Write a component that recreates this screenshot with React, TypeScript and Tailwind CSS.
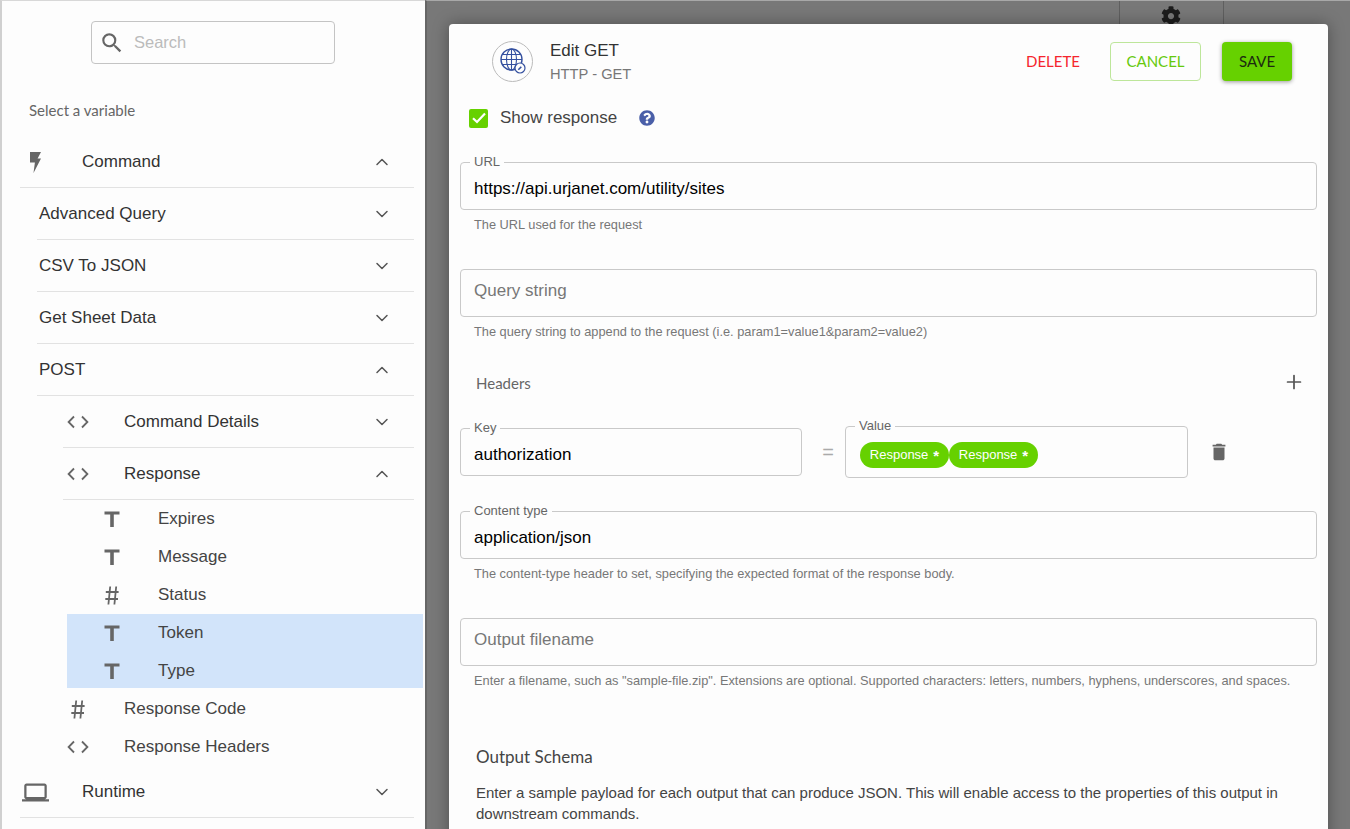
import React from "react";
import { ChevronDown, ChevronUp, Plus } from "lucide-react";
import { FaCog, FaQuestionCircle } from "react-icons/fa";
import { MdDelete, MdOutlineLaptop, MdSearch } from "react-icons/md";

const sans = "font-['Liberation_Sans',Arial,sans-serif]";
const lato = "font-['Lato',sans-serif]";

function Bolt() {
  return (
    <svg width="12" height="21" viewBox="0 0 12 21" className="text-[#666]">
      <path d="M1 0h11L8.6 6.5H12L4.5 21l1.4-10.5H1z" fill="currentColor" />
    </svg>
  );
}
function Code() {
  return (
    <svg width="22" height="14" viewBox="0 0 22 14" fill="none" stroke="#666" strokeWidth="1.8">
      <path d="M7 1.5 1.6 7 7 12.5M15 1.5 20.4 7 15 12.5" />
    </svg>
  );
}
function TIcon() {
  return (
    <svg width="16" height="16" viewBox="0 0 16 16" className="text-[#666]">
      <path d="M0.5 0.5h15v3H9.8V16H6.2V3.5H0.5z" fill="currentColor" />
    </svg>
  );
}
function HashIcon() {
  return (
    <svg width="14" height="19" viewBox="0 0 14 19" fill="none" stroke="#666" strokeWidth="1.8" className="shrink-0">
      <path d="M5.2 0.5 3.4 18.5M11.2 0.5 9.4 18.5M0.8 6H13.6M0.3 13H13" />
    </svg>
  );
}
function Chevron({ up }: { up?: boolean }) {
  const C = up ? ChevronUp : ChevronDown;
  return <C size={20} strokeWidth={1.8} className="text-[#555] shrink-0" />;
}
function Row({ label, up, icon, left, textLeft, chevron = true, lineLeft }: { label: string; up?: boolean; icon?: React.ReactNode; left: string; textLeft?: string; chevron?: boolean; lineLeft?: string }) {
  return (
    <div className={`relative h-[52px] flex items-center pr-[33px] ${left}`}>
      {icon && <div className="w-[42px] flex justify-center shrink-0">{icon}</div>}
      <span className={`flex-1 text-[17px] text-[#333] ${textLeft ?? ""}`}>{label}</span>
      {chevron && <Chevron up={up} />}
      <div className={`absolute bottom-0 right-[11px] h-px bg-[#e2e2e2] ${lineLeft ?? ""}`} />
    </div>
  );
}
function Leaf({ label, hash, selected, last }: { label: string; hash?: boolean; selected?: boolean; last?: boolean }) {
  return (
    <div className={`flex items-center pl-[37px] text-[17px] text-[#444] ${last ? "h-[36px] pt-[1px]" : "h-[38px]"} ${selected ? "bg-[#d2e4fa]" : ""}`}>
      <div className="w-[16px] flex justify-center shrink-0">
        {hash ? <HashIcon /> : <TIcon />}
      </div>
      <span className="ml-[38px]">{label}</span>
    </div>
  );
}
function Field({ label, value, placeholder, hint, className }: { label?: string; value?: string; placeholder?: string; hint: string; className?: string }) {
  return (
    <div className={className}>
      <div className="relative h-[48px] rounded-[4px] border border-[#c9c9c9] flex items-center px-[13px] text-[17px]">
        {label && <span className="absolute -top-[9px] left-[9px] bg-[#fdfdfd] px-[4px] text-[13px] leading-[16px] text-[#666]">{label}</span>}
        {value ? <span className="text-black pt-[6px]">{value}</span> : <span className="text-[#777] pb-[4px]">{placeholder}</span>}
      </div>
      <p className="mt-[7px] pl-[14px] text-[12.8px] leading-[16px] text-[#777]">{hint}</p>
    </div>
  );
}
function Chip() {
  return (
    <span className="h-[26px] w-[89px] rounded-full bg-[#66d100] text-white text-[13px] flex items-center justify-center gap-[5px]">
      Response <span className="text-[15px] font-bold leading-none">*</span>
    </span>
  );
}
function Globe() {
  return (
    <div className="w-[41px] h-[41px] rounded-full border border-[#bbb] flex items-center justify-center">
      <svg width="28" height="28" viewBox="0 0 28 28" fill="none" stroke="#34509f" strokeWidth="1.1">
        <circle cx="12.5" cy="12.5" r="10.5" strokeWidth="1.4" />
        <ellipse cx="12.5" cy="12.5" rx="5" ry="10.5" />
        <path d="M12.5 2v21M2 12.5h21M3.5 7.5h18M3.5 17.5h18" />
        <circle cx="21" cy="21" r="5" fill="#fdfdfd" strokeWidth="1.2" />
        <path d="M19.3 22.7 22.3 19.7" strokeWidth="1.6" />
      </svg>
    </div>
  );
}

export default function App() {
  return (
    <div className={`h-[829px] w-[1350px] flex overflow-hidden ${sans}`}>
      <aside className="w-[425px] shrink-0 h-full bg-[#fdfdfd] border-l-2 border-l-[#d0d0d0] border-t border-t-[#d8d8d8]">
        <div className="pt-[20px] pl-[89px]">
          <div className="w-[244px] h-[43px] rounded-[4px] border border-[#c4c4c4] flex items-center pl-[7px]">
            <MdSearch size={26} className="text-[#666]" />
            <span className="ml-[9px] text-[16.5px] text-[#bbb]">Search</span>
          </div>
        </div>
        <p className={`mt-[36px] pl-[27px] text-[15px] leading-[20px] text-[#666] ${lato}`}>Select a variable</p>
        <div className="mt-[16px]">
          <Row label="Command" up left="pl-[12px]" icon={<Bolt />} textLeft="ml-[26px]" lineLeft="left-[18px]" />
          <Row label="Advanced Query" left="pl-[37px]" lineLeft="left-[35px]" />
          <Row label="CSV To JSON" left="pl-[37px]" lineLeft="left-[35px]" />
          <Row label="Get Sheet Data" left="pl-[37px]" lineLeft="left-[35px]" />
          <Row label="POST" up left="pl-[37px]" lineLeft="left-[35px]" />
          <Row label="Command Details" left="pl-[55px]" icon={<Code />} textLeft="ml-[25px]" lineLeft="left-[61px]" />
          <Row label="Response" up left="pl-[55px]" icon={<Code />} textLeft="ml-[25px]" lineLeft="left-[61px]" />
          <div className="ml-[65px] mr-[2px]">
            <Leaf label="Expires" />
            <Leaf label="Message" />
            <Leaf label="Status" hash />
            <Leaf label="Token" selected />
            <Leaf label="Type" selected last />
          </div>
          <div className="h-[38px] mt-[2px] flex items-center pl-[55px]">
            <div className="w-[42px] flex justify-center shrink-0"><HashIcon /></div>
            <span className="ml-[25px] text-[17px] text-[#444]">Response Code</span>
          </div>
          <div className="h-[38px] flex items-center pl-[55px]">
            <div className="w-[42px] flex justify-center shrink-0"><Code /></div>
            <span className="ml-[25px] text-[17px] text-[#444]">Response Headers</span>
          </div>
          <Row label="Runtime" left="pl-[12px]" icon={<MdOutlineLaptop size={27} className="text-[#666]" />} textLeft="ml-[26px]" lineLeft="left-[18px]" />
        </div>
      </aside>

      <main className="relative flex-1 h-full bg-[#787878] border-l-2 border-l-[#666] border-t border-t-[#a8a8a8] overflow-hidden">
        <div className="absolute -top-px left-[692px] w-[105px] h-[24px] border-x border-[#5f5f5f] flex justify-center pt-[6px] pr-[1px]">
          <FaCog size={20} className="text-[#1c1c1c]" />
        </div>
        <section className="relative mt-[23px] ml-[22px] w-[879px] h-[900px] bg-[#fdfdfd] rounded-t-[4px] shadow-[0_0_16px_rgba(0,0,0,0.35)] pl-[11px] pr-[11px]">
          <header className="flex items-center h-[74px]">
            <div className="ml-[32px]"><Globe /></div>
            <div className="ml-[17px] pt-[3px]">
              <div className="text-[17px] leading-[22px] text-[#333]">Edit GET</div>
              <div className="text-[14.7px] leading-[22px] text-[#777] mt-[1px]">HTTP - GET</div>
            </div>
            <div className={`ml-auto mr-[25px] flex items-center text-[15px] ${lato}`}>
              <span className="text-[#f5252d]">DELETE</span>
              <span className="ml-[30px] w-[91px] h-[39px] rounded-[4px] border border-[#bde69a] text-[#66c90c] flex items-center justify-center">CANCEL</span>
              <span className="ml-[21px] w-[70px] h-[39px] rounded-[4px] bg-[#66d100] text-[#1d2b10] shadow-[0_1px_4px_rgba(0,0,0,0.4)] flex items-center justify-center">SAVE</span>
            </div>
          </header>
          <div className="flex items-center h-[20px] ml-[9px] mt-[10px]">
            <span className="w-[19px] h-[19px] rounded-[2px] bg-[#66d100] flex items-center justify-center">
              <svg width="14" height="12" viewBox="0 0 14 12" fill="none" stroke="#fff" strokeWidth="2.2"><path d="M1 6.2 5 10 13 1.5" /></svg>
            </span>
            <span className="ml-[12px] text-[17px] text-[#444] -mt-[1px]">Show response</span>
            <FaQuestionCircle size={16} className="ml-[22px] text-[#4a5fa8]" />
          </div>
          <Field className="mt-[34px]" label="URL" value="https://api.urjanet.com/utility/sites" hint="The URL used for the request" />
          <Field className="mt-[36px]" placeholder="Query string" hint="The query string to append to the request (i.e. param1=value1&param2=value2)" />
          <div className="mt-[34px] flex items-center justify-between h-[20px] pl-[16px] pr-[12px]">
            <span className={`text-[15px] text-[#666] -mt-[1px] ${lato}`}>Headers</span>
            <Plus size={22} strokeWidth={1.9} className="text-[#555] -mt-[4px]" />
          </div>
          <div className="mt-[32px] flex items-center h-[52px]">
            <div className="relative w-[342px] h-[48px] rounded-[4px] border border-[#c9c9c9] flex items-center px-[13px] text-[17px] text-black">
              <span className="absolute -top-[9px] left-[9px] bg-[#fdfdfd] px-[4px] text-[13px] leading-[16px] text-[#666]">Key</span>
              <span className="pt-[6px]">authorization</span>
            </div>
            <span className="w-[43px] pl-[9px] text-center text-[20px] text-[#aaa]">=</span>
            <div className="relative w-[343px] h-[52px] rounded-[4px] border border-[#c9c9c9] flex items-center pl-[14px] pt-[6px]">
              <span className="absolute -top-[9px] left-[9px] bg-[#fdfdfd] px-[4px] text-[13px] leading-[16px] text-[#666]">Value</span>
              <Chip /><Chip />
            </div>
            <MdDelete size={22} className="ml-[20px] text-[#666]" />
          </div>
          <Field className="mt-[33px]" label="Content type" value="application/json" hint="The content-type header to set, specifying the expected format of the response body." />
          <Field className="mt-[36px]" placeholder="Output filename" hint={'Enter a filename, such as "sample-file.zip". Extensions are optional. Supported characters: letters, numbers, hyphens, underscores, and spaces.'} />
          <h2 className={`mt-[57px] pl-[16px] text-[17px] leading-[22px] text-[#444] ${lato}`}>Output Schema</h2>
          <p className="mt-[14px] pl-[16px] pr-[30px] text-[15px] leading-[21px] text-[#444]">
            Enter a sample payload for each output that can produce JSON. This will enable access to the properties of this output in downstream commands.
          </p>
        </section>
      </main>
    </div>
  );
}
